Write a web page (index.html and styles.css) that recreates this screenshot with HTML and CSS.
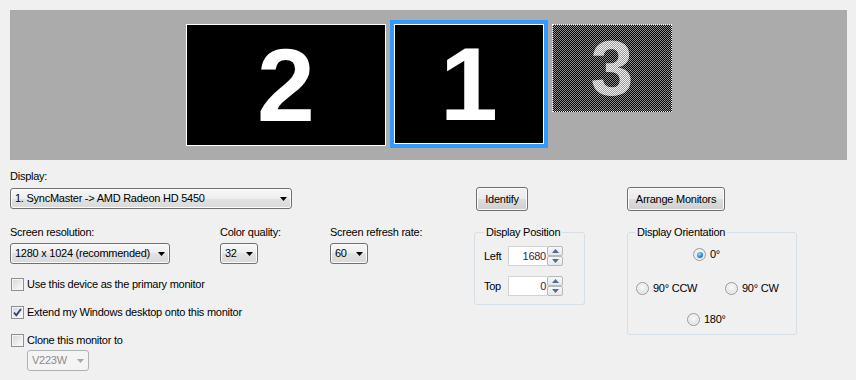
FILE: index.html
```html
<!DOCTYPE html>
<html>
<head>
<meta charset="utf-8">
<title>Display Settings</title>
<link rel="stylesheet" href="styles.css">
</head>
<body>
<div class="page">
  <div class="canvas">
    <div class="mon mon2"><span class="digit">2</span></div>
    <div class="mon1-sel"><div class="mon mon1"><span class="digit">1</span></div></div>
    <div class="mon mon3"><span class="digit digit3">3</span></div>
  </div>

  <div class="form">
    <div class="col-left">
      <div class="label l-display">Display:</div>
      <div class="combo combo-display"><span class="combo-text">1. SyncMaster -&gt; AMD Radeon HD 5450</span><span class="arrow"><svg width="7" height="4" viewBox="0 0 7 4"><path d="M0 0h7L3.5 4z"/></svg></span></div>

      <div class="fields">
        <div class="field f-res">
          <div class="label">Screen resolution:</div>
          <div class="combo combo-res"><span class="combo-text">1280 x 1024 (recommended)</span><span class="arrow"><svg width="7" height="4" viewBox="0 0 7 4"><path d="M0 0h7L3.5 4z"/></svg></span></div>
        </div>
        <div class="field f-color">
          <div class="label">Color quality:</div>
          <div class="combo combo-color"><span class="combo-text">32</span><span class="arrow"><svg width="7" height="4" viewBox="0 0 7 4"><path d="M0 0h7L3.5 4z"/></svg></span></div>
        </div>
        <div class="field f-rate">
          <div class="label">Screen refresh rate:</div>
          <div class="combo combo-rate"><span class="combo-text">60</span><span class="arrow"><svg width="7" height="4" viewBox="0 0 7 4"><path d="M0 0h7L3.5 4z"/></svg></span></div>
        </div>
      </div>

      <div class="checks">
        <div class="check"><span class="box"></span><span>Use this device as the primary monitor</span></div>
        <div class="check"><span class="box"><svg width="11" height="11" viewBox="0 0 11 11"><path d="M2 5.5 L4.3 8.3 L9 2" fill="none" stroke="#23427c" stroke-width="1.8"/></svg></span><span>Extend my Windows desktop onto this monitor</span></div>
        <div class="check"><span class="box"></span><span>Clone this monitor to</span></div>
      </div>
      <div class="combo combo-clone disabled"><span class="combo-text">V223W</span><span class="arrow"><svg width="7" height="4" viewBox="0 0 7 4"><path d="M0 0h7L3.5 4z"/></svg></span></div>
    </div>

    <div class="col-mid">
      <button class="btn btn-identify">Identify</button>
      <fieldset class="group group-pos">
        <legend>Display Position</legend>
        <div class="pos-row">
          <span class="pos-label">Left</span>
          <div class="spin-input">1680</div>
          <div class="spin-btns">
            <span class="sbtn"><svg width="7" height="4" viewBox="0 0 7 4"><path d="M0 4h7L3.5 0z"/></svg></span>
            <span class="sbtn"><svg width="7" height="4" viewBox="0 0 7 4"><path d="M0 0h7L3.5 4z"/></svg></span>
          </div>
        </div>
        <div class="pos-row pos-row2">
          <span class="pos-label">Top</span>
          <div class="spin-input">0</div>
          <div class="spin-btns">
            <span class="sbtn"><svg width="7" height="4" viewBox="0 0 7 4"><path d="M0 4h7L3.5 0z"/></svg></span>
            <span class="sbtn"><svg width="7" height="4" viewBox="0 0 7 4"><path d="M0 0h7L3.5 4z"/></svg></span>
          </div>
        </div>
      </fieldset>
    </div>

    <div class="col-right">
      <button class="btn btn-arrange">Arrange Monitors</button>
      <fieldset class="group group-orient">
        <legend>Display Orientation</legend>
        <div class="orow orow1"><span class="radio checked"></span><span>0°</span></div>
        <div class="orow orow2">
          <div class="ritem"><span class="radio"></span><span>90° CCW</span></div>
          <div class="ritem"><span class="radio"></span><span>90° CW</span></div>
        </div>
        <div class="orow orow3"><span class="radio"></span><span>180°</span></div>
      </fieldset>
    </div>
  </div>
</div>
</body>
</html>
```

FILE: styles.css
```css
html, body {
  margin: 0;
  background: #f0f0f0;
}
body {
  font-family: "Liberation Sans", Arial, sans-serif;
  font-size: 11px;
  line-height: 13px;
  letter-spacing: -0.25px;
  color: #000;
}
.page {
  padding: 10px 0 0 10px;
  width: 837px;
}

/* monitor canvas */
.canvas {
  position: relative;
  width: 837px;
  height: 150px;
  background: #ababab;
}
.mon {
  position: absolute;
  box-sizing: border-box;
  background: #000;
  border: 1px solid #fff;
  display: flex;
  align-items: center;
  justify-content: center;
}
.digit {
  font-family: "Liberation Sans", Arial, sans-serif;
  font-weight: bold;
  font-size: 104px;
  line-height: 1;
  letter-spacing: 0;
  color: #fff;
}
.mon2 {
  left: 176px;
  top: 14px;
  width: 200px;
  height: 122px;
}
.mon1-sel {
  position: absolute;
  left: 380px;
  top: 10px;
  width: 158px;
  height: 128px;
  box-sizing: border-box;
  border: 4px solid #3399ff;
}
.mon1-sel .mon {
  position: static;
  width: 150px;
  height: 120px;
}
.mon3 {
  left: 542px;
  top: 14px;
  width: 120px;
  height: 88px;
  border: 1px dotted #fff;
  background: repeating-conic-gradient(#000 0 25%, #8f8f8f 0 50%) 0 0 / 2px 2px;
}
.digit3 {
  font-size: 77px;
  color: transparent;
  background: repeating-conic-gradient(#f4f4f4 0 25%, #9a9a9a 0 50%) 0 0 / 2px 2px;
  -webkit-background-clip: text;
  background-clip: text;
}

/* form */
.form {
  display: grid;
  grid-template-columns: 464px 153px 170px;
}
.label {
  height: 13px;
  white-space: nowrap;
}
.l-display {
  margin-top: 10px;
}

.combo {
  box-sizing: border-box;
  height: 21px;
  border: 1px solid #707070;
  border-radius: 3px;
  background: linear-gradient(#f7f7f7 0%, #eeeeee 50%, #e2e2e2 50%, #d9d9d9 100%);
  box-shadow: inset 0 0 0 1px #fbfbfb;
  display: flex;
  align-items: center;
  padding-left: 4px;
  white-space: nowrap;
}
.combo-text {
  flex: 1;
  overflow: hidden;
}
.arrow {
  width: 16px;
  display: flex;
  justify-content: center;
  align-items: center;
}
.arrow svg {
  display: block;
  fill: #000;
}
.combo-display {
  margin-top: 5px;
  width: 282px;
}
.fields {
  display: flex;
  margin-top: 17px;
}
.field .combo {
  margin-top: 4px;
}
.f-res { width: 210px; }
.f-color { width: 110px; }
.combo-res { width: 160px; }
.combo-color { width: 38px; }
.combo-rate { width: 38px; }

.checks {
  margin-top: 14px;
  padding-left: 1px;
  display: flex;
  flex-direction: column;
  gap: 15px;
}
.check {
  display: flex;
  align-items: center;
  height: 13px;
  white-space: nowrap;
}
.box {
  box-sizing: border-box;
  width: 13px;
  height: 13px;
  margin-right: 3px;
  border: 1px solid #8e8f8f;
  background: linear-gradient(135deg, #d6d6d6 0%, #f2f2f2 70%, #fbfbfb 100%);
  box-shadow: inset 0 0 0 1px #f4f4f4;
  display: flex;
  align-items: center;
  justify-content: center;
}
.box svg { display: block; }

.combo-clone {
  margin-top: 3px;
  margin-left: 17px;
  width: 62px;
}
.combo.disabled {
  border-color: #adb2b5;
  background: #f4f4f4;
  box-shadow: none;
  color: #8d8d8d;
}
.combo.disabled .arrow svg { fill: #a7a7a7; }

/* buttons */
.btn {
  display: block;
  box-sizing: border-box;
  height: 24px;
  margin: 27px 0 0 0;
  padding: 0;
  font: inherit;
  letter-spacing: inherit;
  color: #000;
  border: 1px solid #707070;
  border-radius: 3px;
  background: linear-gradient(#f2f2f2 0%, #ebebeb 50%, #dddddd 50%, #cfcfcf 100%);
  box-shadow: inset 0 0 0 1px #fbfbfb;
  text-align: center;
  white-space: nowrap;
}
.btn-identify {
  width: 52px;
  margin-left: 2px;
}
.btn-arrange {
  width: 98px;
}

/* group boxes */
.group {
  box-sizing: border-box;
  margin: 15px 0 0 0;
  border: 1px solid #d5dfe5;
  border-radius: 3px;
  min-width: 0;
}
.group legend {
  padding: 0 2px;
  line-height: 13px;
  white-space: nowrap;
}
.group-pos {
  width: 111px;
  padding: 0 9px 8px;
}
.pos-row {
  display: flex;
  align-items: center;
  height: 20px;
  margin-top: 7px;
}
.pos-row2 {
  margin-top: 10px;
}
.pos-label {
  width: 24px;
}
.spin-input {
  box-sizing: border-box;
  width: 39px;
  height: 20px;
  background: #fff;
  border: 1px solid #d3d3d3;
  border-right: none;
  text-align: right;
  padding-right: 1px;
  line-height: 18px;
  color: #3b1a48;
}
.spin-btns {
  display: flex;
  flex-direction: column;
  height: 20px;
}
.sbtn {
  box-sizing: border-box;
  width: 16px;
  height: 10px;
  border: 1px solid #b6b9bc;
  border-radius: 2px;
  background: linear-gradient(#f8f8f8, #e6e8ea);
  display: flex;
  align-items: center;
  justify-content: center;
}
.sbtn svg {
  display: block;
  fill: #4f6a93;
}

.group-orient {
  width: 170px;
  padding: 0 7px 8px;
}
.orow {
  display: flex;
  align-items: center;
  height: 13px;
  white-space: nowrap;
}
.orow1 {
  margin-top: 9px;
  margin-left: 58px;
}
.orow2 {
  display: grid;
  grid-template-columns: 89px auto;
  margin-top: 21px;
  margin-left: 1px;
}
.orow3 {
  margin-top: 18px;
  margin-left: 52px;
}
.ritem {
  display: flex;
  align-items: center;
}
.radio {
  box-sizing: border-box;
  width: 13px;
  height: 13px;
  margin-right: 4px;
  border-radius: 50%;
  border: 1px solid #9a9a9a;
  background: radial-gradient(circle at 50% 40%, #fbfbfb 0%, #e6e6e6 55%, #cfcfcf 100%);
  box-shadow: inset 0 0 0 1px #f2f2f2;
  position: relative;
}
.radio.checked::after {
  content: "";
  position: absolute;
  left: 2.5px;
  top: 2.5px;
  width: 6px;
  height: 6px;
  border-radius: 50%;
  background: radial-gradient(circle at 40% 35%, #a8dcff 0%, #3a8bd6 50%, #14497f 100%);
}
```
